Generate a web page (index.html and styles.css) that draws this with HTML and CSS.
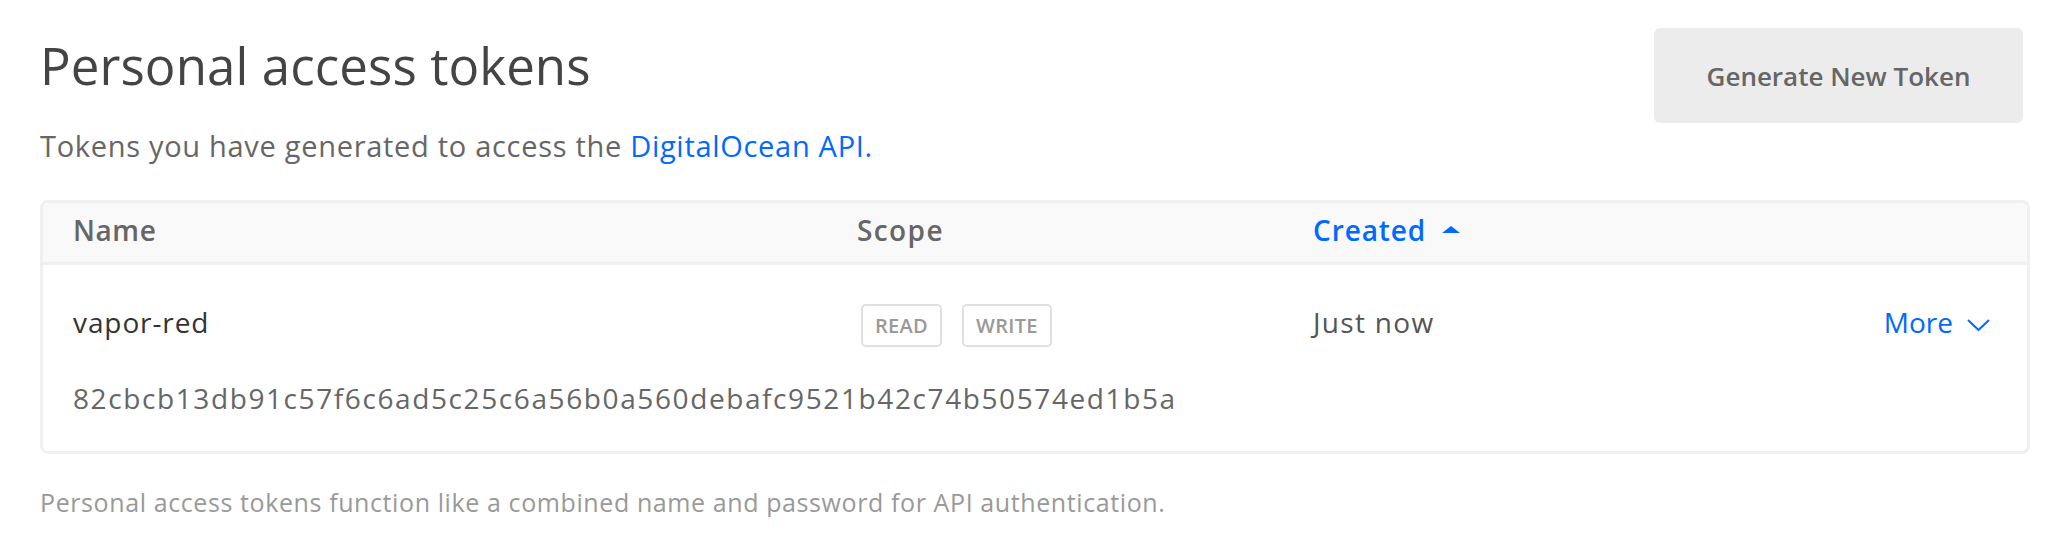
FILE: index.html
```html
<!DOCTYPE html>
<html>
<head>
<meta charset="utf-8">
<link rel="stylesheet" href="styles.css">
</head>
<body>
<div class="page">
  <div class="head">
    <div class="head-text">
      <h1 class="title">Personal access tokens</h1>
      <p class="lead">Tokens you have generated to access the <a class="link" href="#">DigitalOcean API.</a></p>
    </div>
    <button class="btn">Generate New Token</button>
  </div>

  <div class="table">
    <div class="thead cols">
      <div class="th">Name</div>
      <div class="th th-wide">Scope</div>
      <div class="th th-sort">Created <svg class="caret" width="18" height="7" viewBox="0 0 18 7"><path d="M0 7 L9 0 L18 7 Z" fill="#0069ff"/></svg></div>
      <div class="th"></div>
    </div>
    <div class="trow">
      <div class="cols main">
        <div class="name">vapor-red</div>
        <div class="scopes"><span class="badge">READ</span><span class="badge">WRITE</span></div>
        <div class="created">Just now</div>
        <div class="more">More <svg class="chev" width="23" height="12" viewBox="0 0 23 12"><path d="M1 1 L11.5 11 L22 1" fill="none" stroke="#0069ff" stroke-width="2"/></svg></div>
      </div>
      <div class="hash">82cbcb13db91c57f6c6ad5c25c6a56b0a560debafc9521b42c74b50574ed1b5a</div>
    </div>
  </div>

  <p class="note">Personal access tokens function like a combined name and password for API authentication.</p>
</div>
</body>
</html>
```
FILE: styles.css
```css
* { box-sizing: border-box; }
html, body { margin: 0; padding: 0; background: #fff; }
body { font-family: "Open Sans", "Lato", sans-serif; color: #444; }

.page { padding: 0 40px 0 40px; }

.head { display: flex; justify-content: space-between; align-items: flex-start; }
.head-text { padding-top: 35px; }
.title { margin: 0; font-size: 51px; line-height: 60px; font-weight: 400; letter-spacing: 0.1px; color: #444; }
.lead { margin: 34px 0 0 0; font-size: 29px; line-height: 34px; letter-spacing: 0.7px; color: #666; }
.link { color: #0069ff; text-decoration: none; }

.btn {
  margin-top: 28px; margin-right: 7px;
  width: 369px; height: 95px;
  border: 0; border-radius: 6px;
  background: #ececec; color: #666;
  font-family: inherit; font-size: 26px; font-weight: 600;
}

.table {
  margin-top: 37px;
  border: 3px solid #f0f0f0; border-radius: 8px;
  overflow: hidden;
}
.cols {
  display: grid;
  grid-template-columns: 784px 456px 1fr auto;
  align-items: center;
  padding: 0 37px 0 30px;
}
.thead {
  background: #f9f9f9;
  border-bottom: 3px solid #f0f0f0;
  height: 62px;
  padding-bottom: 5px;
}
.th { font-size: 28px; font-weight: 600; letter-spacing: 0.6px; color: #666; }
.th-wide { letter-spacing: 1.4px; }
.th-sort { color: #0069ff; display: flex; align-items: center; gap: 16px; letter-spacing: 0.9px; }
.caret { margin-top: -2px; }

.trow { padding: 38px 0 36px 0; }
.main { height: 43px; }
.name { font-size: 28px; letter-spacing: 0.9px; color: #333; padding-bottom: 7px; }
.scopes { display: flex; gap: 20px; padding-left: 4px; }
.badge {
  display: inline-flex; align-items: center; justify-content: center;
  height: 43px; padding: 0 12px;
  border: 2px solid #e0e0e0; border-radius: 5px;
  font-size: 20px; font-weight: 600; letter-spacing: 0.3px; color: #999;
}
.created { font-size: 28px; letter-spacing: 1.3px; color: #555; padding-bottom: 7px; }
.more { font-size: 28px; color: #0069ff; display: flex; align-items: center; gap: 14px; padding-bottom: 7px; }
.chev { margin-top: 6px; }
.hash { margin-top: 35px; padding-left: 30px; font-size: 28px; line-height: 34px; letter-spacing: 1.6px; color: #666; }

.note { margin: 33px 0 0 0; font-size: 25px; line-height: 30px; letter-spacing: 0.6px; color: #999; }
```
